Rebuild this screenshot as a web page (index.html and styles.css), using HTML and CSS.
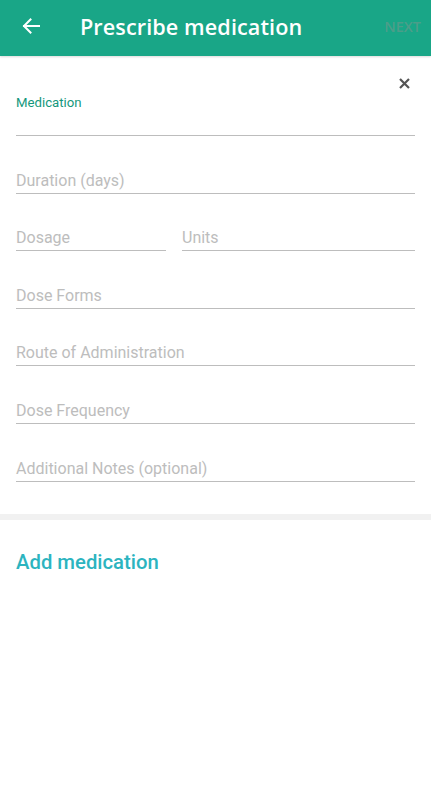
FILE: index.html
```html
<!DOCTYPE html>
<html>
<head>
<meta charset="utf-8">
<link rel="stylesheet" href="styles.css">
</head>
<body>
<header class="appbar">
  <button class="back" aria-label="Back">
    <svg width="18" height="16" viewBox="0 0 18 16"><path d="M17 8H2M8.5 1.5L2 8l6.5 6.5" fill="none" stroke="#fff" stroke-width="2" stroke-linecap="square"/></svg>
  </button>
  <h1 class="title">Prescribe medication</h1>
  <span class="next">NEXT</span>
</header>
<main class="form">
  <div class="close">
    <svg width="11" height="11" viewBox="0 0 11 11"><path d="M1 1l9 9M10 1l-9 9" stroke="#555" stroke-width="2.2"/></svg>
  </div>
  <div class="field first"><div class="input"><span class="float-label">Medication</span></div></div>
  <div class="field"><div class="input">Duration (days)</div></div>
  <div class="field row">
    <div class="input">Dosage</div>
    <div class="input">Units</div>
  </div>
  <div class="field"><div class="input">Dose Forms</div></div>
  <div class="field"><div class="input">Route of Administration</div></div>
  <div class="field"><div class="input">Dose Frequency</div></div>
  <div class="field"><div class="input">Additional Notes (optional)</div></div>
</main>
<div class="divider"></div>
<div class="add">Add medication</div>
</body>
</html>
```
FILE: styles.css
```css
html, body { margin: 0; padding: 0; background: #fff; }
body { font-family: Roboto, "Noto Sans", sans-serif; width: 431px; }
.appbar {
  height: 56px;
  box-sizing: border-box;
  padding-bottom: 4px;
  background: #19a687;
  display: flex;
  align-items: center;
  box-shadow: 0 1px 2px rgba(0,0,0,0.15);
}
.back {
  background: none; border: 0; padding: 0;
  width: 22px; margin-left: 22px;
  display: flex; align-items: center;
}
.title {
  margin: 0 0 0 36px;
  font-family: "Open Sans", sans-serif;
  font-weight: 600;
  font-size: 21.6px;
  color: #fff;
  flex: 1;
  letter-spacing: 0.1px;
}
.next {
  font-family: "Open Sans", sans-serif;
  font-size: 14.5px;
  font-weight: 600;
  color: rgba(120,150,140,0.55);
  margin-right: 10px;
}
.form { position: relative; padding: 0 16px 32px; }
.close { position: absolute; right: 21px; top: 22px; width: 11px; height: 11px; display: flex; }
.field { height: 57.6px; display: flex; align-items: flex-end; }
.field.first { height: 80px; }
.input {
  flex: 1;
  font-size: 16px;
  line-height: 20px;
  color: #bdbdbd;
  padding-bottom: 2px;
  border-bottom: 1.5px solid #bdbdbd;
}
.field.first .input { height: 56px; position: relative; }
.float-label {
  position: absolute; left: 0; top: 18px;
  font-size: 13.2px; line-height: 16px; color: #14977c;
}
.row { display: grid; grid-template-columns: 150px 1fr; gap: 16px; align-items: end; }
.divider { height: 6px; background: #f1f1f1; margin-top: 0; }
.add {
  padding: 30px 16px 0;
  font-size: 20.3px;
  font-weight: 500;
  color: #2cb4bf;
  line-height: 24px;
}
```
